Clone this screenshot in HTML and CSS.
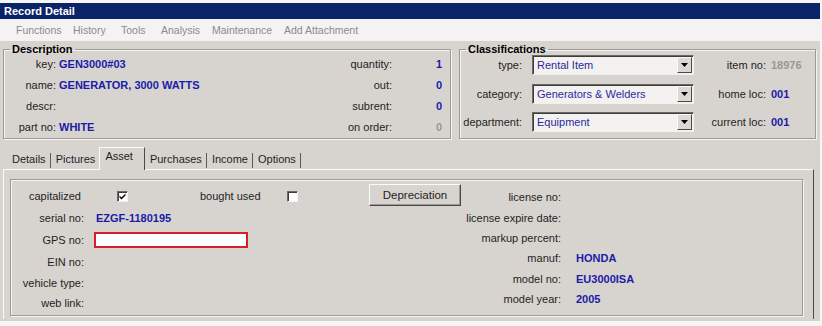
FILE: index.html
```html
<!DOCTYPE html>
<html>
<head>
<meta charset="utf-8">
<link rel="stylesheet" href="styles.css">
</head>
<body>
<div class="window">
  <div class="title">Record Detail</div>
  <div class="menu">
    <span class="mi m1">Functions</span>
    <span class="mi m2">History</span>
    <span class="mi m3">Tools</span>
    <span class="mi m4">Analysis</span>
    <span class="mi m5">Maintenance</span>
    <span class="mi m6">Add Attachment</span>
  </div>
  <div class="top">
    <fieldset class="group desc">
      <legend>Description</legend>
      <div class="desc-grid">
        <span class="lbl">key:</span><span class="val">GEN3000#03</span>
        <span class="lbl">quantity:</span><span class="num">1</span>
        <span class="lbl">name:</span><span class="val">GENERATOR, 3000 WATTS</span>
        <span class="lbl">out:</span><span class="num">0</span>
        <span class="lbl">descr:</span><span class="val"></span>
        <span class="lbl">subrent:</span><span class="num">0</span>
        <span class="lbl">part no:</span><span class="val">WHITE</span>
        <span class="lbl">on order:</span><span class="num grey">0</span>
      </div>
    </fieldset>
    <fieldset class="group cls">
      <legend>Classifications</legend>
      <div class="cls-grid">
        <span class="lbl">type:</span>
        <div class="combo"><span class="ctext">Rental Item</span><span class="cbtn"><svg width="7" height="4" viewBox="0 0 7 4"><path d="M0 0H7L3.5 4Z" fill="#000"/></svg></span></div>
        <span class="lbl">item no:</span><span class="val grey">18976</span>
        <span class="lbl">category:</span>
        <div class="combo"><span class="ctext">Generators &amp; Welders</span><span class="cbtn"><svg width="7" height="4" viewBox="0 0 7 4"><path d="M0 0H7L3.5 4Z" fill="#000"/></svg></span></div>
        <span class="lbl">home loc:</span><span class="val">001</span>
        <span class="lbl">department:</span>
        <div class="combo"><span class="ctext">Equipment</span><span class="cbtn"><svg width="7" height="4" viewBox="0 0 7 4"><path d="M0 0H7L3.5 4Z" fill="#000"/></svg></span></div>
        <span class="lbl">current loc:</span><span class="val">001</span>
      </div>
    </fieldset>
  </div>
  <div class="tabs">
    <span class="tab">Details</span>
    <span class="tab nosep">Pictures</span>
    <span class="tab active">Asset</span>
    <span class="tab">Purchases</span>
    <span class="tab">Income</span>
    <span class="tab">Options</span>
  </div>
  <div class="panel">
    <div class="inner">
      <div class="left">
        <div class="row1">
          <span class="cap">capitalized</span>
          <span class="chk"><svg width="9" height="9" viewBox="0 0 9 9"><path d="M1.5 3.5L3.5 5.5L7.5 1.5V3.5L3.5 7.5L1.5 5.5Z" fill="#000"/></svg></span>
          <span class="bought">bought used</span>
          <span class="chk"></span>
          <span class="btn">Depreciation</span>
        </div>
        <div class="lgrid">
          <span class="lbl">serial no:</span><span class="val">EZGF-1180195</span>
          <span class="lbl">GPS no:</span><span class="val"><span class="gps"></span></span>
          <span class="lbl">EIN no:</span><span class="val"></span>
          <span class="lbl">vehicle type:</span><span class="val"></span>
          <span class="lbl">web link:</span><span class="val"></span>
        </div>
      </div>
      <div class="rgrid">
        <span class="lbl">license no:</span><span class="val"></span>
        <span class="lbl">license expire date:</span><span class="val"></span>
        <span class="lbl">markup percent:</span><span class="val"></span>
        <span class="lbl">manuf:</span><span class="val">HONDA</span>
        <span class="lbl">model no:</span><span class="val">EU3000ISA</span>
        <span class="lbl">model year:</span><span class="val">2005</span>
      </div>
    </div>
  </div>
</div>
</body>
</html>
```

FILE: styles.css
```css
html, body {
  margin: 0;
  padding: 0;
  background: #f7f6f6;
}
body {
  font-family: "Liberation Sans", Arial, sans-serif;
  font-size: 11px;
  color: #1e1e1e;
  padding-top: 3px;
}
.window {
  width: 820px;
  height: 318px;
  background: #d7d4d0;
  overflow: hidden;
}
.title {
  height: 16px;
  line-height: 16px;
  background: #0b2368;
  color: #fff;
  font-weight: bold;
  font-size: 11px;
  padding-left: 4px;
}
.menu {
  height: 22px;
  background: #f4f2f2;
  display: flex;
  align-items: center;
  color: #8d8b8b;
  font-size: 10.5px;
}
.mi { white-space: nowrap; }
.m1 { margin-left: 16px; width: 57px; }
.m2 { width: 48px; }
.m3 { width: 40px; }
.m4 { width: 51px; }
.m5 { width: 72px; }
.top {
  display: flex;
  padding: 2px 0 0 3px;
  gap: 8px;
  height: 100px;
}
.group {
  margin: 0;
  padding: 0;
  border: 1px solid #9e9b97;
  box-shadow: inset 1px 1px 0 #f4f3f1, 1px 1px 0 #f4f3f1;
  min-width: 0;
}
.group legend {
  font-weight: bold;
  color: #000;
  padding: 0 2px;
  margin-left: 6px;
  line-height: 13px;
}
.desc { width: 446px; height: 94px; }
.cls { width: 355px; height: 94px; }
.desc-grid {
  display: grid;
  grid-template-columns: 52px 1fr 120px 55px;
  column-gap: 3px;
  grid-auto-rows: 21px;
  align-items: center;
  margin-top: -3px;
}
.lbl { text-align: right; white-space: nowrap; }
.val { color: #1b1ba8; font-weight: bold; white-space: nowrap; }
.num { color: #1b1ba8; font-weight: bold; text-align: right; padding-right: 8px; }
.grey { color: #9a9896; }
.cls-grid {
  display: grid;
  grid-template-columns: 62px 172px 72px 45px;
  grid-auto-rows: 28.5px;
  align-items: center;
  margin-top: -5px;
}
.cls-grid > :nth-child(4n+2) { margin-left: 10px; }
.cls-grid > :nth-child(4n+4) { margin-left: 5px; }
.combo {
  height: 20px;
  box-sizing: border-box;
  display: flex;
  border: 1px solid;
  border-color: #6c6a67 #f2f1ef #f2f1ef #6c6a67;
  box-shadow: inset 1px 1px 0 #3e3d3b;
  background: #f3f2f0;
}
.ctext {
  flex: 1;
  color: #2a2a9e;
  line-height: 18px;
  padding-left: 4px;
  white-space: nowrap;
}
.cbtn {
  width: 15px;
  margin: 1px 1px 1px 0;
  box-sizing: border-box;
  border: 1px solid;
  border-color: #fbfbfa #4a4947 #4a4947 #fbfbfa;
  background: #dcd9d5;
  display: flex;
  align-items: center;
  justify-content: center;
}
.tabs {
  display: flex;
  align-items: flex-end;
  height: 23px;
  padding-left: 7px;
  margin-top: 4px;
}
.tab {
  height: 15px;
  line-height: 12px;
  padding: 0 4px 0 5px;
  border-right: 1px solid #5c5a58;
  margin-bottom: 2px;
}
.tab.nosep { border-right: none; padding-right: 4px; }
.tab.active {
  height: 22px;
  line-height: 17px;
  border-left: 1px solid #fbfbfa;
  border-top: 1px solid #fbfbfa;
  border-right: 1px solid #4a4947;
  padding: 0 11px 0 5px;
  margin-bottom: 0;
  background: #d7d4d0;
  position: relative;
  z-index: 1;
}
.panel {
  margin-left: 3px;
  width: 811px;
  height: 150px;
  box-sizing: border-box;
  border-top: 1px solid #fbfbfa;
  border-left: 1px solid #fbfbfa;
  border-right: 1px solid #4a4947;
  margin-top: -1px;
  padding: 9px 10px 0 6px;
}
.inner {
  height: 137px;
  box-sizing: border-box;
  border: 1px solid #9e9b97;
  box-shadow: inset 1px 1px 0 #f4f3f1, 1px 1px 0 #f4f3f1;
  display: flex;
  padding-top: 5px;
}
.left { width: 454px; }
.row1 {
  display: flex;
  align-items: center;
  height: 22px;
}
.cap { margin-left: 18px; width: 88px; }
.bought { margin-left: 72px; width: 87px; }
.chk {
  width: 11px;
  height: 11px;
  box-sizing: border-box;
  border: 1px solid;
  border-color: #6c6a67 #f2f1ef #f2f1ef #6c6a67;
  box-shadow: inset 1px 1px 0 #3e3d3b;
  background: #fff;
  display: flex;
  align-items: center;
  justify-content: center;
}
.btn {
  margin-left: 71px;
  width: 92px;
  height: 22px;
  box-sizing: border-box;
  border: 1px solid;
  border-color: #fbfbfa #4a4947 #4a4947 #fbfbfa;
  box-shadow: inset -1px -1px 0 #9e9b97;
  display: flex;
  align-items: center;
  justify-content: center;
  font-size: 11.5px;
  margin-top: -2px;
}
.lgrid {
  display: grid;
  grid-template-columns: 73px 1fr;
  column-gap: 12px;
  grid-template-rows: 22px 22px 21px 21px 20px;
  align-items: center;
}
.gps {
  display: block;
  width: 154px;
  height: 16px;
  box-sizing: border-box;
  border: 2px solid #d0202c;
  background: #fff;
  margin-left: -2px;
}
.rgrid {
  display: grid;
  grid-template-columns: 96px 1fr;
  column-gap: 15px;
  grid-auto-rows: 20.4px;
  align-items: center;
  margin-top: 2px;
  align-content: start;
}
```
